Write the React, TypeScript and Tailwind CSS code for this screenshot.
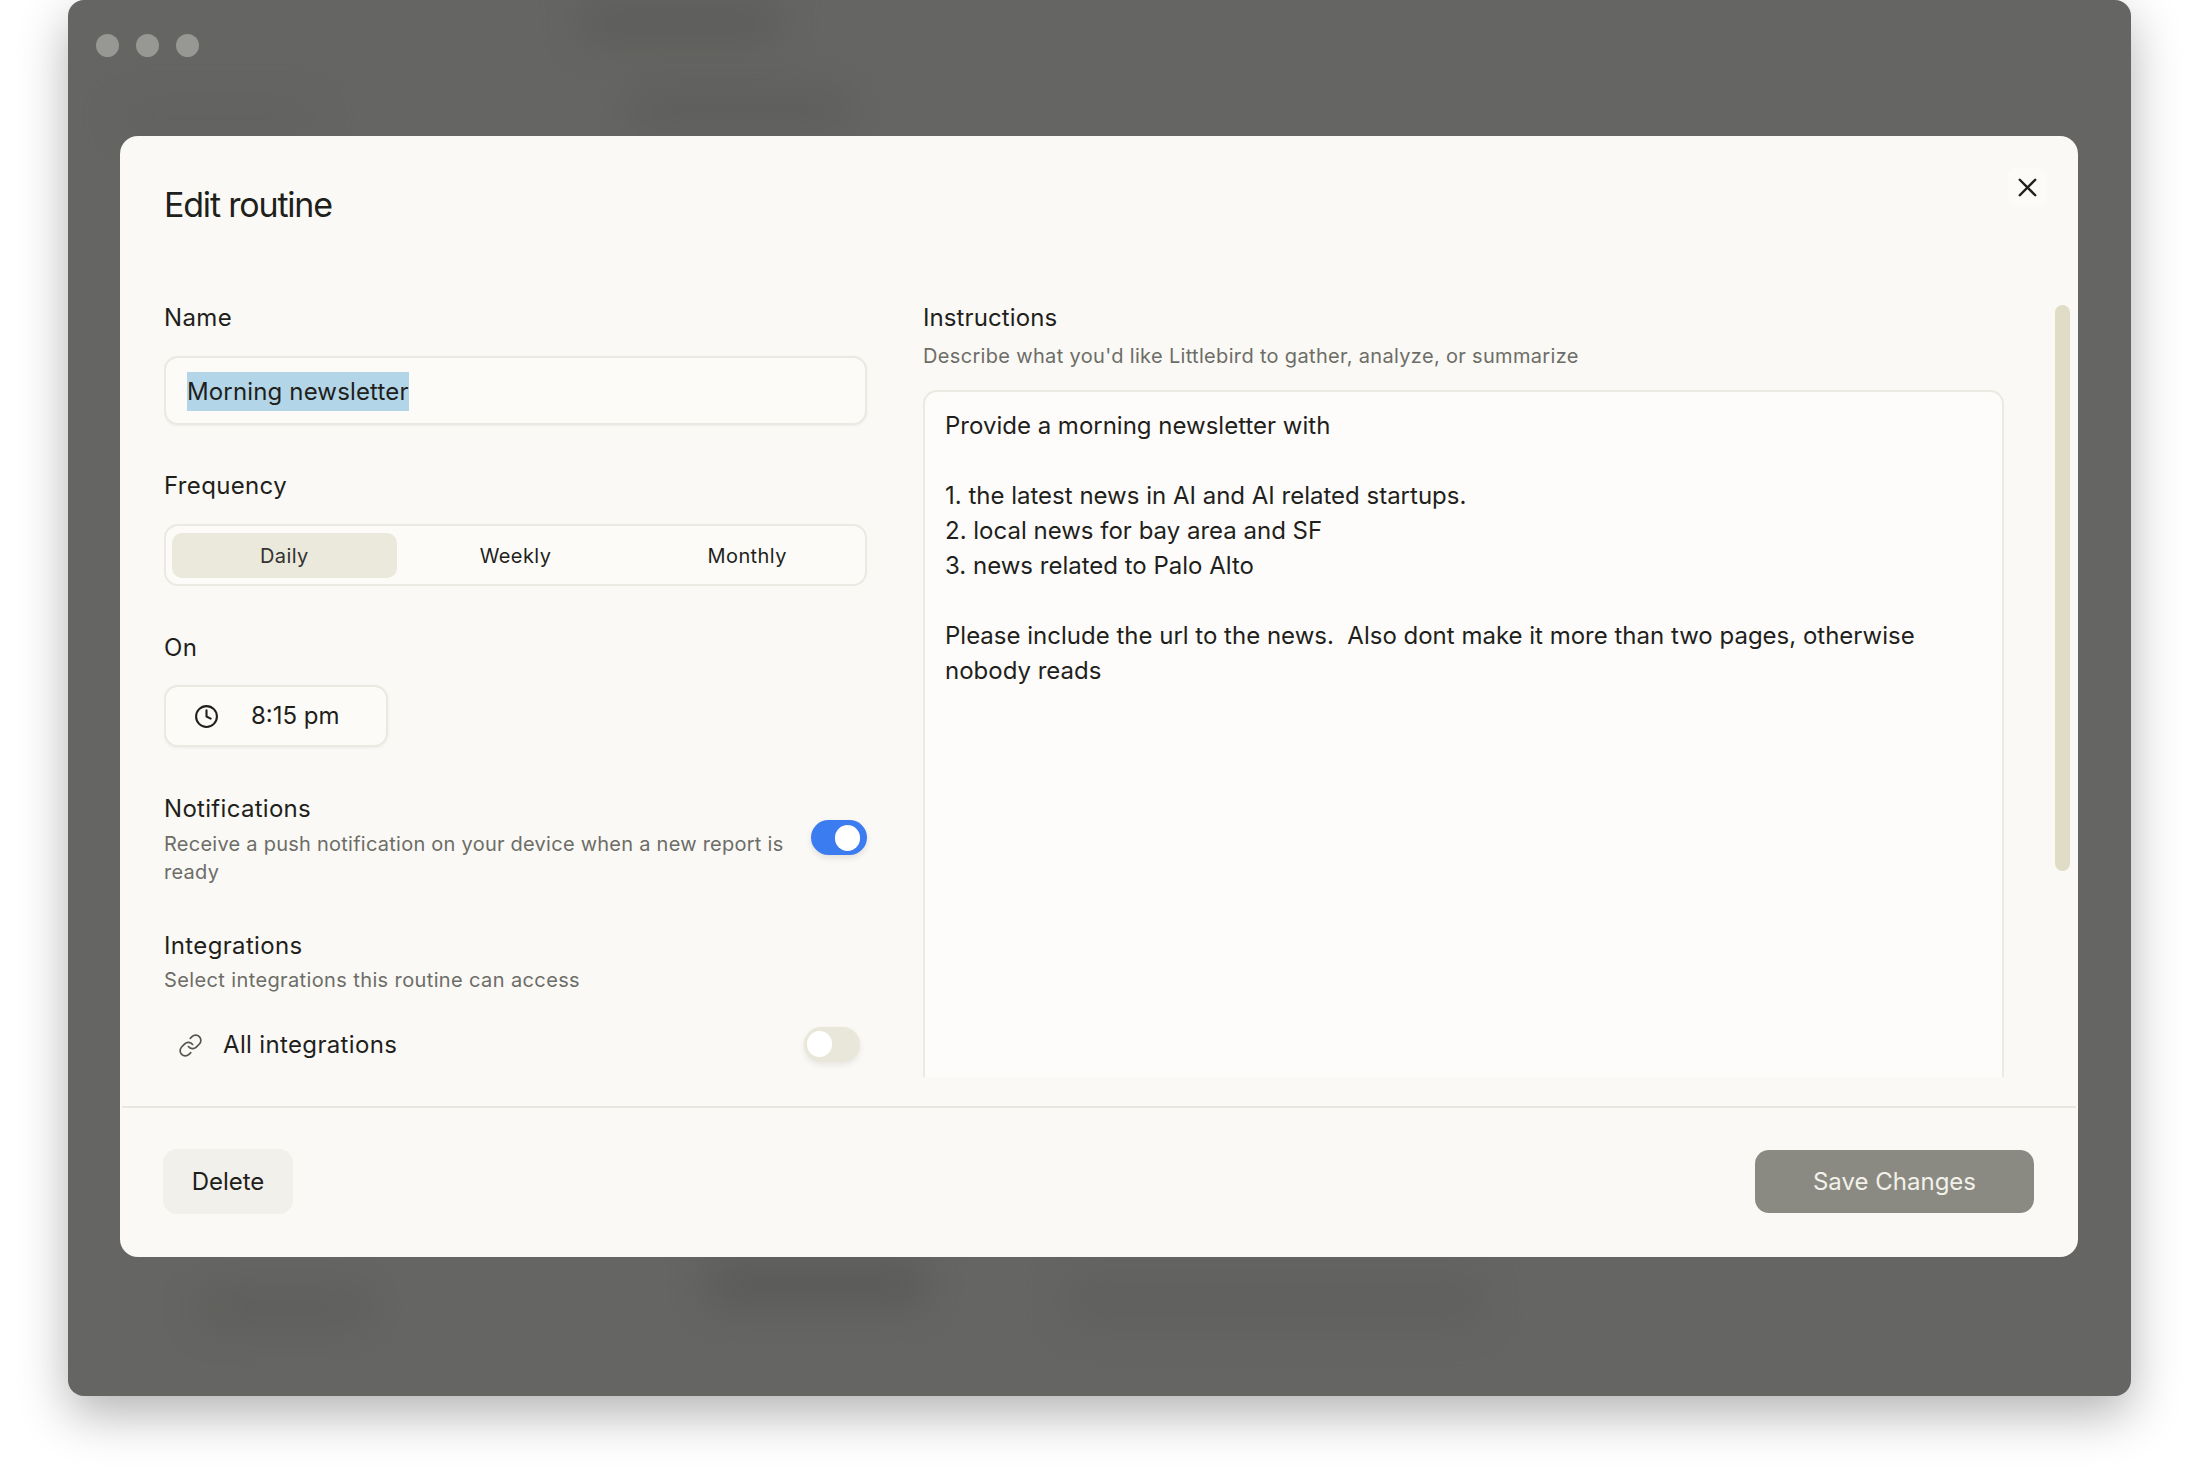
import React from "react";
import { Clock, Link, X } from "lucide-react";

const font = { fontFamily: "Inter, 'Noto Sans', sans-serif" };

function Blob({ c }: { c: string }) {
  return <div className={"absolute bg-[#525250] blur-[20px] " + c} />;
}

export default function App() {
  return (
    <div style={font} className="w-[2198px] h-[1480px] bg-white overflow-hidden text-[#1f1f1c] antialiased">
      <div className="relative ml-[68px] w-[2063px] h-[1396px] rounded-[16px] bg-[#656563] shadow-[0_18px_50px_rgba(0,0,0,0.3)] overflow-hidden">
        <Blob c="left-[512px] top-[5px] w-[200px] h-[35px] opacity-50" />
        <Blob c="left-[562px] top-[90px] w-[218px] h-[40px] opacity-40" />
        <Blob c="left-[50px] top-[105px] w-[200px] h-[24px] opacity-25" />
        <Blob c="left-[640px] top-[1262px] w-[217px] h-[44px] opacity-60" />
        <Blob c="left-[135px] top-[1290px] w-[168px] h-[34px] opacity-40" />
        <Blob c="left-[997px] top-[1272px] w-[420px] h-[54px] opacity-25" />

        <div className="relative flex gap-[17px] pt-[34px] pl-[28px]">
          <div className="w-[23px] h-[23px] rounded-full bg-[#979794]" />
          <div className="w-[23px] h-[23px] rounded-full bg-[#979794]" />
          <div className="w-[23px] h-[23px] rounded-full bg-[#979794]" />
        </div>

        <div className="relative ml-[52px] mt-[79px] w-[1958px] h-[1121px] rounded-[18px] bg-[#faf9f5] flex flex-col overflow-hidden">
          <div className="absolute right-[31px] top-[32px] w-[39px] h-[39px] rounded-lg bg-[#fcfbf8] flex items-center justify-center">
            <X className="w-[31px] h-[31px] shrink-0 text-[#1f1f1c]" strokeWidth={1.9} />
          </div>
          <div className="absolute left-[1935px] top-[169px] w-[15px] h-[566px] rounded-full bg-[#e0dcc5]" />

          <h1 className="mt-[49px] ml-[44px] text-[34px] leading-[40px] font-normal tracking-[-0.035em]">Edit routine</h1>

          <div className="mt-[78px] ml-[44px] flex gap-[56px] h-[774px] overflow-hidden">
            <div className="w-[703px] shrink-0">
              <div className="text-[24px] leading-[30px] tracking-[0.35px]">Name</div>
              <div className="mt-[23px] h-[69px] rounded-[14px] border-2 border-[#ebe9e1] bg-[#fcfbf8] shadow-[0_1px_3px_rgba(0,0,0,0.05)] pl-[21px] pt-[1px] flex items-center">
                <span className="bg-[#b3d5e8] text-[24px] leading-[39px] tracking-[0.15px]">Morning newsletter</span>
              </div>

              <div className="mt-[46px] text-[24px] leading-[30px] tracking-[0.35px]">Frequency</div>
              <div className="mt-[23px] h-[62px] rounded-[14px] border-2 border-[#ebe9e1] bg-[#fcfbf8] px-[2px] grid grid-cols-3 items-center text-[20px] tracking-[0.4px]">
                <div className="ml-[4px] mr-[3px] h-[45px] pt-[2px] rounded-[10px] bg-[#ebe8dc] flex items-center justify-center text-[#33332f]">Daily</div>
                <div className="text-center pt-[2px]">Weekly</div>
                <div className="text-center pt-[2px]">Monthly</div>
              </div>

              <div className="mt-[47px] text-[24px] leading-[30px] tracking-[0.35px]">On</div>
              <div className="mt-[22px] w-[224px] h-[62px] rounded-[14px] border-2 border-[#ebe9e1] bg-[#fcfbf8] shadow-[0_1px_3px_rgba(0,0,0,0.06)] flex items-center pl-[28px] gap-[32px] text-[24px]">
                <Clock className="w-[25px] h-[25px]" strokeWidth={2} />
                <span>8:15 pm</span>
              </div>

              <div className="mt-[47px] flex justify-between">
                <div className="w-[640px]">
                  <div className="text-[24px] leading-[30px] tracking-[0.3px]">Notifications</div>
                  <div className="mt-[6px] text-[20px] leading-[28px] tracking-[0.25px] text-[#6d6d68]">Receive a push notification on your device when a new report is ready</div>
                </div>
                <div className="mt-[26px] w-[56px] h-[35px] rounded-full bg-[#3b7cf0] shadow-[0_3px_6px_rgba(0,0,0,0.1)] flex items-center justify-end pr-[7px]">
                  <div className="w-[25px] h-[26px] rounded-full bg-white" />
                </div>
              </div>

              <div className="mt-[45px] text-[24px] leading-[30px] tracking-[0.35px]">Integrations</div>
              <div className="mt-[5px] text-[20px] leading-[28px] tracking-[0.38px] text-[#6d6d68]">Select integrations this routine can access</div>

              <div className="mt-[33px] h-[36px] flex items-center">
                <Link className="ml-[14px] w-[25px] h-[25px] text-[#55554f]" strokeWidth={1.6} />
                <span className="ml-[20px] text-[24px] tracking-[0.35px]">All integrations</span>
                <div className="ml-auto mr-[7px] -mt-[2px] w-[56px] h-[35px] rounded-full bg-[#e9e6da] shadow-[0_3px_6px_rgba(0,0,0,0.08)] flex items-center pl-[3px]">
                  <div className="w-[25px] h-[26px] rounded-full bg-white" />
                </div>
              </div>
            </div>

            <div className="w-[1081px] shrink-0 flex flex-col">
              <div className="text-[24px] leading-[30px] tracking-[0.1px]">Instructions</div>
              <div className="mt-[9px] text-[20px] leading-[28px] tracking-[0.33px] text-[#6d6d68]">Describe what you'd like Littlebird to gather, analyze, or summarize</div>
              <div className="mt-[20px] flex-1 rounded-t-[14px] border-2 border-b-0 border-[#ebe9e1] bg-[#fdfcfa] pl-[20px] pr-[40px] pt-[16px] text-[24px] leading-[35px] whitespace-pre-wrap">{"Provide a morning newsletter with\n\n1. the latest news in AI and AI related startups.\n2. local news for bay area and SF\n3. news related to Palo Alto\n\nPlease include the url to the news.  Also dont make it more than two pages, otherwise nobody reads"}</div>
            </div>
          </div>

          <div className="mt-[29px] mx-[2px] border-t-2 border-[#e9e7e0]" />

          <div className="flex justify-between items-start pt-[41px] pl-[43px] pr-[44px]">
            <button className="w-[130px] h-[65px] rounded-[14px] bg-[#f2f0ea] text-[24px] text-[#1f1f1c]">Delete</button>
            <button className="mt-[1px] w-[279px] h-[63px] rounded-[14px] bg-[#8b8a82] text-[24px] text-[#f2f1ea]">Save Changes</button>
          </div>
        </div>
      </div>
    </div>
  );
}
